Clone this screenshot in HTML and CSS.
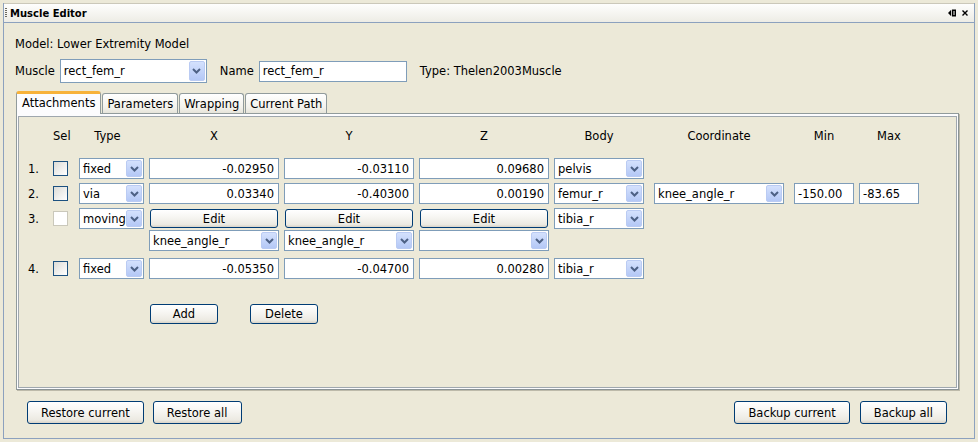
FILE: index.html
```html
<!DOCTYPE html>
<html>
<head>
<meta charset="utf-8">
<title>Muscle Editor</title>
<link rel="stylesheet" href="styles.css">
</head>
<body>
<div class="window">
  <div class="titlebar">
    <span class="grip"></span>
    <span class="title">Muscle Editor</span>
    <svg class="tb-icons" width="21" height="8" viewBox="0 0 21 8">
      <path d="M0 4 L3.2 0.8 V7.2 Z" fill="#000"/>
      <rect x="4.75" y="1.25" width="2.5" height="5.5" fill="none" stroke="#000" stroke-width="1.5"/>
      <path d="M14.5 1.5 L19.5 6.5 M19.5 1.5 L14.5 6.5" stroke="#000" stroke-width="1.4" fill="none"/>
    </svg>
  </div>
  <div class="content">
    <div class="model">Model: Lower Extremity Model</div>
    <div class="muscle-row">
      <span class="lbl">Muscle</span>
      <div class="combo combo-muscle"><span class="val">rect_fem_r</span><span class="arrow"><svg width="9" height="6" viewBox="0 0 9 6"><path d="M1 1 L4.5 4.5 L8 1" fill="none" stroke="#4D6185" stroke-width="2"/></svg></span></div>
      <span class="lbl name-lbl">Name</span>
      <div class="field field-name">rect_fem_r</div>
      <span class="lbl type-lbl">Type: Thelen2003Muscle</span>
    </div>
    <div class="tabs">
      <div class="tab selected">Attachments</div>
      <div class="tab">Parameters</div>
      <div class="tab">Wrapping</div>
      <div class="tab">Current Path</div>
    </div>
    <div class="tabpane">
      <div class="panel">
        <div class="row head">
          <span></span>
          <span class="h w-sel">Sel</span>
          <span class="h w-type">Type</span>
          <span class="h w-xyz">X</span>
          <span class="h w-xyz">Y</span>
          <span class="h w-xyz">Z</span>
          <span class="h w-body">Body</span>
          <span class="h w-xyz">Coordinate</span>
          <span class="h w-min">Min</span>
          <span class="h w-min">Max</span>
        </div>

        <div class="row r-first">
          <span class="num">1.</span>
          <span class="chk"></span>
          <div class="combo w-type"><span class="val">fixed</span><span class="arrow"><svg width="9" height="6" viewBox="0 0 9 6"><path d="M1 1 L4.5 4.5 L8 1" fill="none" stroke="#4D6185" stroke-width="2"/></svg></span></div>
          <div class="field num-field w-xyz">-0.02950</div>
          <div class="field num-field w-xyz">-0.03110</div>
          <div class="field num-field w-xyz">0.09680</div>
          <div class="combo w-body"><span class="val">pelvis</span><span class="arrow"><svg width="9" height="6" viewBox="0 0 9 6"><path d="M1 1 L4.5 4.5 L8 1" fill="none" stroke="#4D6185" stroke-width="2"/></svg></span></div>
        </div>

        <div class="row r-gap4">
          <span class="num">2.</span>
          <span class="chk"></span>
          <div class="combo w-type"><span class="val">via</span><span class="arrow"><svg width="9" height="6" viewBox="0 0 9 6"><path d="M1 1 L4.5 4.5 L8 1" fill="none" stroke="#4D6185" stroke-width="2"/></svg></span></div>
          <div class="field num-field w-xyz">0.03340</div>
          <div class="field num-field w-xyz">-0.40300</div>
          <div class="field num-field w-xyz">0.00190</div>
          <div class="combo w-body"><span class="val">femur_r</span><span class="arrow"><svg width="9" height="6" viewBox="0 0 9 6"><path d="M1 1 L4.5 4.5 L8 1" fill="none" stroke="#4D6185" stroke-width="2"/></svg></span></div>
          <div class="combo w-xyz"><span class="val">knee_angle_r</span><span class="arrow"><svg width="9" height="6" viewBox="0 0 9 6"><path d="M1 1 L4.5 4.5 L8 1" fill="none" stroke="#4D6185" stroke-width="2"/></svg></span></div>
          <div class="field w-min">-150.00</div>
          <div class="field w-min">-83.65</div>
        </div>

        <div class="row r-gap4">
          <span class="num">3.</span>
          <span class="chk disabled"></span>
          <div class="combo w-type"><span class="val">moving</span><span class="arrow"><svg width="9" height="6" viewBox="0 0 9 6"><path d="M1 1 L4.5 4.5 L8 1" fill="none" stroke="#4D6185" stroke-width="2"/></svg></span></div>
          <div class="btn edit">Edit</div>
          <div class="btn edit">Edit</div>
          <div class="btn edit">Edit</div>
          <div class="combo w-body"><span class="val">tibia_r</span><span class="arrow"><svg width="9" height="6" viewBox="0 0 9 6"><path d="M1 1 L4.5 4.5 L8 1" fill="none" stroke="#4D6185" stroke-width="2"/></svg></span></div>
        </div>

        <div class="row r-gap1">
          <span></span>
          <span></span>
          <span></span>
          <div class="combo w-xyz"><span class="val">knee_angle_r</span><span class="arrow"><svg width="9" height="6" viewBox="0 0 9 6"><path d="M1 1 L4.5 4.5 L8 1" fill="none" stroke="#4D6185" stroke-width="2"/></svg></span></div>
          <div class="combo w-xyz"><span class="val">knee_angle_r</span><span class="arrow"><svg width="9" height="6" viewBox="0 0 9 6"><path d="M1 1 L4.5 4.5 L8 1" fill="none" stroke="#4D6185" stroke-width="2"/></svg></span></div>
          <div class="combo w-xyz"><span class="val"></span><span class="arrow"><svg width="9" height="6" viewBox="0 0 9 6"><path d="M1 1 L4.5 4.5 L8 1" fill="none" stroke="#4D6185" stroke-width="2"/></svg></span></div>
        </div>

        <div class="row r-gap7">
          <span class="num">4.</span>
          <span class="chk"></span>
          <div class="combo w-type"><span class="val">fixed</span><span class="arrow"><svg width="9" height="6" viewBox="0 0 9 6"><path d="M1 1 L4.5 4.5 L8 1" fill="none" stroke="#4D6185" stroke-width="2"/></svg></span></div>
          <div class="field num-field w-xyz">-0.05350</div>
          <div class="field num-field w-xyz">-0.04700</div>
          <div class="field num-field w-xyz">0.00280</div>
          <div class="combo w-body"><span class="val">tibia_r</span><span class="arrow"><svg width="9" height="6" viewBox="0 0 9 6"><path d="M1 1 L4.5 4.5 L8 1" fill="none" stroke="#4D6185" stroke-width="2"/></svg></span></div>
        </div>

        <div class="add-row">
          <div class="btn small">Add</div>
          <div class="btn small">Delete</div>
        </div>
      </div>
    </div>
    <div class="bottom">
      <div class="group">
        <div class="btn big">Restore current</div>
        <div class="btn big">Restore all</div>
      </div>
      <div class="group group-right">
        <div class="btn big">Backup current</div>
        <div class="btn big">Backup all</div>
      </div>
    </div>
  </div>
</div>
</body>
</html>
```

FILE: styles.css
```css
* { box-sizing: border-box; }
html, body { margin: 0; padding: 0; }
body {
  background: #ECE9D8;
  font-family: "DejaVu Sans", "Noto Sans", sans-serif;
  font-size: 11.5px;
  color: #000;
  width: 978px;
  height: 442px;
  overflow: hidden;
}
.window {
  margin: 3px 0 0 3px;
  width: 972px;
  height: 436px;
  border: 1px solid #8CA1BE;
  border-top: 0;
  display: flex;
  flex-direction: column;
}
.titlebar {
  flex: none;
  height: 20px;
  display: flex;
  align-items: center;
  padding: 0 5px 0 1px;
  border-top: 1px solid #CBC8BA;
  border-bottom: 1px solid #8CA1BE;
  background: linear-gradient(#FEFEFD, #EDECE5);
}
.grip {
  width: 2px;
  height: 10px;
  margin-right: 3px;
  background: repeating-linear-gradient(to bottom, #6B6A60 0 1px, transparent 1px 2px);
}
.title { flex: 1; font-weight: bold; font-size: 10px; }
.tb-icons { display: block; }

.content {
  flex: 1;
  display: flex;
  flex-direction: column;
  padding: 14px 0 14px 11px;
}
.model { line-height: 15px; }
.muscle-row { margin-top: 7px; height: 24px; display: flex; align-items: center; }
.lbl { line-height: 15px; white-space: nowrap; }
.name-lbl { margin-left: 13px; }
.type-lbl { margin-left: 13px; }

.combo {
  display: flex;
  align-items: stretch;
  background: #fff;
  border: 1px solid #7F9DB9;
  height: 21px;
}
.combo .val {
  flex: 1;
  min-width: 0;
  padding-left: 3px;
  display: flex;
  align-items: center;
  white-space: nowrap;
  overflow: hidden;
}
.combo .arrow {
  flex: none;
  width: 16px;
  margin: 1px 1px 1px 0;
  border-radius: 2px;
  border: 1px solid #BACBF3;
  background: linear-gradient(#D4E1FD, #B4C8F6);
  display: flex;
  align-items: center;
  justify-content: center;
}
.combo .arrow svg { display: block; }
.combo-muscle { width: 147px; height: 24px; margin-left: 5px; }

.field {
  background: #fff;
  border: 1px solid #7F9DB9;
  height: 21px;
  display: flex;
  align-items: center;
  padding: 0 3px;
  white-space: nowrap;
}
.num-field { justify-content: flex-end; padding-right: 4px; }
.field-name { width: 148px; margin-left: 5px; }

.tabs {
  margin: 8px 0 0 1px;
  height: 22px;
  display: flex;
  align-items: flex-end;
}
.tab {
  height: 20px;
  padding: 0 4px;
  border: 1px solid #919B9C;
  border-bottom: 0;
  border-radius: 3px 3px 0 0;
  background: linear-gradient(#FFFFFF, #F3F2EC 70%, #E6E4DA);
  display: flex;
  align-items: center;
  white-space: nowrap;
}
.tab + .tab { margin-left: 1px; }
.tab.selected {
  height: 23px;
  margin-bottom: -1px;
  padding: 0 5px 2px;
  background: #FCFCFE;
  border-top: 3px solid #F7B23A;
  position: relative;
  z-index: 1;
}

.tabpane {
  flex: 1;
  margin: 0 15px 0 1px;
  border: 1px solid #919B9C;
  border-right-color: #8A9394;
  border-bottom-color: #8A9394;
  padding: 2px 1px 1px 1px;
  background: #FCFCFE;
  box-shadow: 1px 1px 0 #BDBAAA;
  display: flex;
}
.panel {
  flex: 1;
  border: 1px solid #9FA7AE;
  background: #ECE9D8;
  padding-top: 12px;
}

.row {
  display: grid;
  grid-template-columns: 34px 26px 70px 135px 135px 135px 100px 140px 65px 60px;
  height: 21px;
  align-items: center;
}
.row > * { justify-self: start; }
.head { height: 15px; line-height: 15px; }
.h { text-align: center; }
.w-sel { width: 16px; }
.w-type { width: 65px; }
.head .w-type { width: 57px; }
.w-xyz { width: 130px; }
.w-body { width: 90px; }
.w-min { width: 60px; }
.r-first { margin-top: 14px; }
.r-gap4 { margin-top: 4px; }
.r-gap1 { margin-top: 1px; }
.r-gap7 { margin-top: 7px; }
.num { padding-left: 9px; }

.chk {
  width: 15px;
  height: 15px;
  border: 1px solid #1C5180;
  background: linear-gradient(135deg, #DCDCD7, #FFFFFF);
}
.chk.disabled { border-color: #CAC8BB; background: #FFFFFF; }

.btn {
  border: 1px solid #003C74;
  border-radius: 3px;
  background: linear-gradient(#FFFFFF 0%, #F6F5F1 45%, #ECEAE2 85%, #D8D3C8 100%);
  display: flex;
  align-items: center;
  justify-content: center;
  white-space: nowrap;
}
.edit { width: 128px; height: 19px; margin-left: 1px; }
.add-row { margin: 25px 0 0 131px; display: flex; gap: 32px; }
.small { width: 68px; height: 20px; }

.bottom {
  margin-top: 11px;
  height: 23px;
  display: flex;
  justify-content: space-between;
  padding: 0 27px 0 12px;
}
.group { display: flex; gap: 9px; }
.group-right { gap: 10px; }
.big { height: 23px; padding: 0 13px; }
```
